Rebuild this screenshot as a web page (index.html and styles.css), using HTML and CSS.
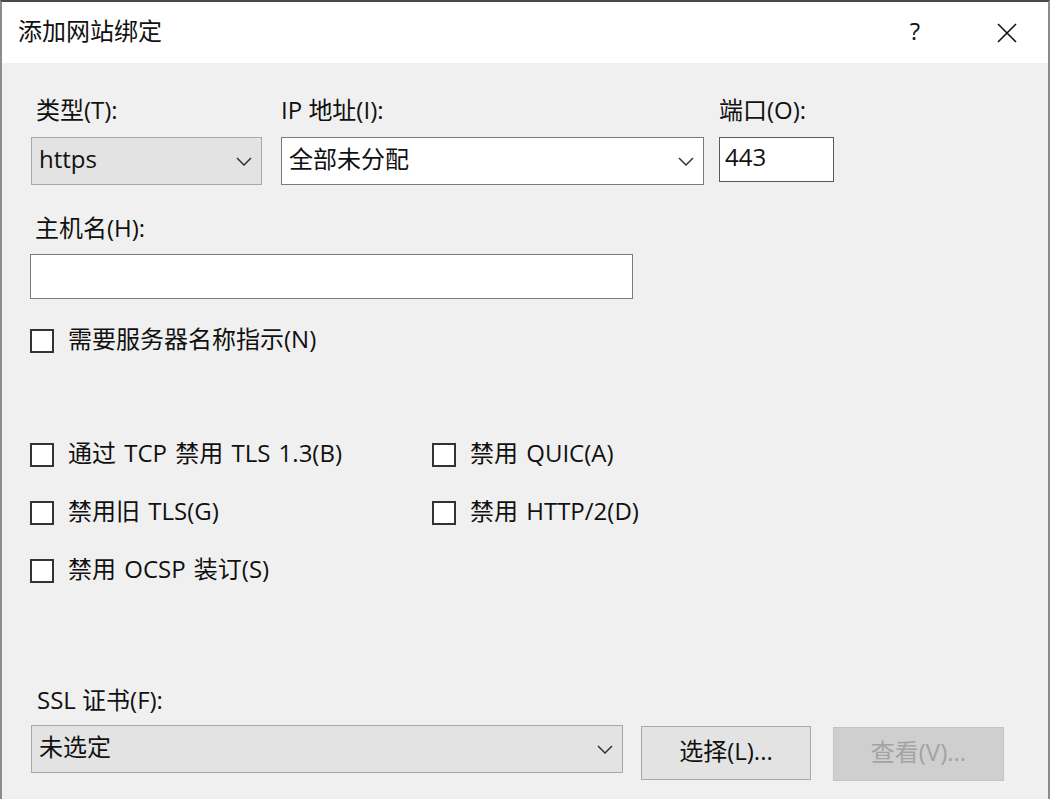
FILE: index.html
```html
<!DOCTYPE html>
<html lang="zh-CN">
<head>
<meta charset="utf-8">
<title>添加网站绑定</title>
<link rel="stylesheet" href="styles.css">
</head>
<body>
<div class="dialog">
  <div class="titlebar">
    <span class="title">添加网站绑定</span>
    <span class="help">?</span>
    <span class="close">
      <svg width="20" height="20" viewBox="0 0 20 20"><path d="M1 1 L19 19 M19 1 L1 19" stroke="#111" stroke-width="1.6" fill="none"/></svg>
    </span>
  </div>
  <div class="content">
    <div class="row-top">
      <div class="field col-type">
        <div class="label ind">类型(T):</div>
        <div class="combo gray"><span class="t">https</span><svg class="chev" width="16" height="9" viewBox="0 0 16 9"><polyline points="1,1 8,8 15,1" fill="none" stroke="#333" stroke-width="1.5"/></svg></div>
      </div>
      <div class="field col-ip">
        <div class="label">IP 地址(I):</div>
        <div class="combo white"><span class="t">全部未分配</span><svg class="chev" width="16" height="9" viewBox="0 0 16 9"><polyline points="1,1 8,8 15,1" fill="none" stroke="#333" stroke-width="1.5"/></svg></div>
      </div>
      <div class="field col-port">
        <div class="label">端口(O):</div>
        <div class="textbox port"><span class="t">443</span></div>
      </div>
    </div>

    <div class="field host">
      <div class="label ind">主机名(H):</div>
      <div class="textbox hostbox"></div>
    </div>

    <div class="check sni"><span class="box"></span><span class="t">需要服务器名称指示(N)</span></div>

    <div class="check-grid">
      <div class="check"><span class="box"></span><span class="t">通过 TCP 禁用 TLS 1.3(B)</span></div>
      <div class="check"><span class="box"></span><span class="t">禁用 QUIC(A)</span></div>
      <div class="check"><span class="box"></span><span class="t">禁用旧 TLS(G)</span></div>
      <div class="check"><span class="box"></span><span class="t">禁用 HTTP/2(D)</span></div>
      <div class="check"><span class="box"></span><span class="t">禁用 OCSP 装订(S)</span></div>
    </div>

    <div class="ssl">
      <div class="label ind2">SSL 证书(F):</div>
      <div class="ssl-row">
        <div class="combo gray sslcombo"><span class="t">未选定</span><svg class="chev" width="16" height="9" viewBox="0 0 16 9"><polyline points="1,1 8,8 15,1" fill="none" stroke="#333" stroke-width="1.5"/></svg></div>
        <div class="btn"><span class="t">选择(L)...</span></div>
        <div class="btn disabled"><span class="t">查看(V)...</span></div>
      </div>
    </div>
  </div>
</div>
</body>
</html>
```

FILE: styles.css
```css
* { box-sizing: border-box; }
html, body { margin: 0; padding: 0; background: #ffffff; }
body {
  font-family: "Open Sans", "Noto Sans CJK SC", sans-serif;
  font-size: 24px;
  color: #111;
  width: 1054px;
  height: 799px;
  overflow: hidden;
}
.dialog {
  width: 1050px;
  height: 799px;
  border-left: 2px solid #8c8c8c;
  border-right: 2px solid #8c8c8c;
  border-top: 2px solid #4a4a4a;
  display: flex;
  flex-direction: column;
}
.titlebar {
  height: 61px;
  flex: none;
  background: #ffffff;
  display: flex;
  align-items: center;
  padding-left: 16px;
  padding-right: 31px;
}
.title { font-size: 24px; line-height: 30px; padding-bottom: 4px; }
.help {
  margin-left: auto;
  width: 40px;
  text-align: center;
  font-size: 24px;
  line-height: 30px;
  padding-bottom: 4px;
}
.close { margin-left: 62px; width: 20px; height: 20px; display: flex; }
.content {
  flex: 1;
  background: #f0f0f0;
  padding: 34px 0 0 28px;
}
.t { padding-bottom: 5px; line-height: 30px; }
.label { line-height: 26px; height: 30px; white-space: nowrap; }
.label.ind { padding-left: 5px; }
.label.ind2 { padding-left: 7px; }
.row-top { display: flex; align-items: flex-start; }
.field .label { margin-bottom: 10px; }
.col-type { width: 231px; margin-left: 1px; }
.col-ip { width: 423px; margin-left: 19px; }
.col-port { width: 115px; margin-left: 15px; }
.combo {
  height: 48px;
  display: flex;
  align-items: center;
  justify-content: space-between;
  padding: 0 9px 0 7px;
  white-space: nowrap;
}
.combo.gray { background: #e3e3e3; border: 1px solid #a8a8a8; }
.combo.white { background: #ffffff; border: 1px solid #7a7a7a; }
.chev { flex: none; }
.textbox {
  background: #ffffff;
  border: 1px solid #7a7a7a;
  display: flex;
  align-items: center;
  padding-left: 5px;
}
.port { height: 45px; border-color: #5a5a5a; }
.host { margin-top: 30px; }
.host .label { margin-bottom: 9px; }
.hostbox { width: 603px; height: 45px; }
.check {
  display: flex;
  align-items: center;
  height: 30px;
  white-space: nowrap;
}
.box {
  width: 24px;
  height: 24px;
  border: 2px solid #333;
  background: #ffffff;
  margin-right: 14px;
  flex: none;
}
.check .t { word-spacing: 2px; }
.sni { margin-top: 27px; }
.check-grid {
  margin-top: 84px;
  display: grid;
  grid-template-columns: 402px auto;
  row-gap: 28px;
}
.ssl { margin-top: 101px; }
.ssl .label { margin-bottom: 8px; }
.ssl-row { display: flex; align-items: flex-start; margin-left: 1px; }
.sslcombo { width: 592px; }
.btn {
  width: 170px;
  height: 54px;
  margin-top: 1px;
  margin-left: 18px;
  background: #e3e3e3;
  border: 1px solid #a8a8a8;
  display: flex;
  align-items: center;
  justify-content: center;
  white-space: nowrap;
}
.btn.disabled {
  width: 171px;
  margin-top: 2px;
  margin-left: 22px;
  background: #cfcfcf;
  border-color: #c4c4c4;
  color: #a3a3a3;
}
```
